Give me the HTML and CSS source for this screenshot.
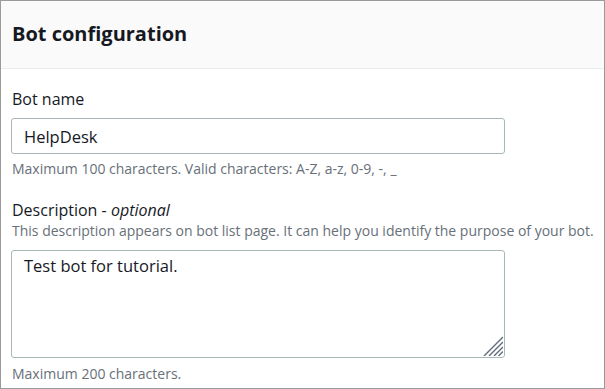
FILE: index.html
```html
<!DOCTYPE html>
<html lang="en">
<head>
    <meta charset="UTF-8">
    <title>Bot configuration</title>
    <link rel="stylesheet" href="styles.css">
</head>
<body>

<div class="panel">
    <div class="panel-header">
        <h2>Bot configuration</h2>
    </div>
    <div class="panel-body">
        <div class="field">
            <label class="field-label" for="bot-name">Bot name</label>
            <input class="text-input" id="bot-name" type="text" value="HelpDesk">
            <div class="hint">Maximum 100 characters. Valid characters: A-Z, a-z, 0-9, -, _</div>
        </div>
        <div class="field">
            <label class="field-label desc-label" for="bot-desc">Description - <i>optional</i></label>
            <div class="hint desc-hint">This description appears on bot list page. It can help you identify the purpose of your bot.</div>
            <div class="textarea-wrap">
                <textarea class="text-area" id="bot-desc">Test bot for tutorial.</textarea>
                <svg class="grip" width="20" height="20" viewBox="0 0 20 20">
                    <path d="M20 1 L1 20 M20 6 L6 20 M20 11 L11 20 M20 15.5 L15.5 20" stroke="#5f6b7a" stroke-width="1.4" fill="none"/>
                </svg>
            </div>
            <div class="hint count-hint">Maximum 200 characters.</div>
        </div>
    </div>
</div>

</body>
</html>
```

FILE: styles.css
```css
html, body {
    margin: 0;
    padding: 0;
}
body {
    font-family: 'Open Sans', sans-serif;
    color: #16191f;
    background-color: #ffffff;
}
.panel {
    width: 605px;
    height: 389px;
    box-sizing: border-box;
    border: 1px solid #9a9a9a;
    overflow: hidden;
}
.panel-header {
    height: 68px;
    background-color: #fafafa;
    border-bottom: 1px solid #eaeded;
    box-sizing: border-box;
    padding: 0 11px 2px 11px;
    display: flex;
    align-items: center;
}
.panel-header h2 {
    margin: 0;
    font-size: 20px;
    font-weight: 700;
    color: #16191f;
}
.panel-body {
    padding: 20px 10px 0 10px;
}
.field {
    margin-bottom: 23px;
}
.field-label {
    display: block;
    font-size: 16px;
    line-height: 20px;
    color: #16191f;
    padding-left: 1px;
}
.desc-label {
    line-height: 18px;
}
.text-input {
    display: block;
    width: 494px;
    height: 36px;
    box-sizing: border-box;
    margin-top: 9px;
    border: 1px solid #aab7b8;
    border-radius: 3px;
    padding: 0 12px;
    font-family: 'Open Sans', sans-serif;
    font-size: 16.5px;
    color: #16191f;
    background: #ffffff;
    outline: none;
}
.hint {
    font-size: 14px;
    line-height: 18px;
    color: #687078;
    margin-top: 6px;
    padding-left: 1px;
}
.desc-hint {
    margin-top: 4px;
    margin-bottom: 11px;
    line-height: 16px;
}
.count-hint {
    margin-top: 7px;
}
.textarea-wrap {
    position: relative;
    width: 494px;
    height: 108px;
}
.text-area {
    display: block;
    width: 494px;
    height: 108px;
    box-sizing: border-box;
    border: 1px solid #aab7b8;
    border-radius: 3px;
    padding: 4px 12px;
    font-family: 'Open Sans', sans-serif;
    font-size: 16.5px;
    line-height: 22px;
    color: #16191f;
    resize: none;
    outline: none;
}
.grip {
    position: absolute;
    right: 2px;
    bottom: 2px;
    pointer-events: none;
}
```
